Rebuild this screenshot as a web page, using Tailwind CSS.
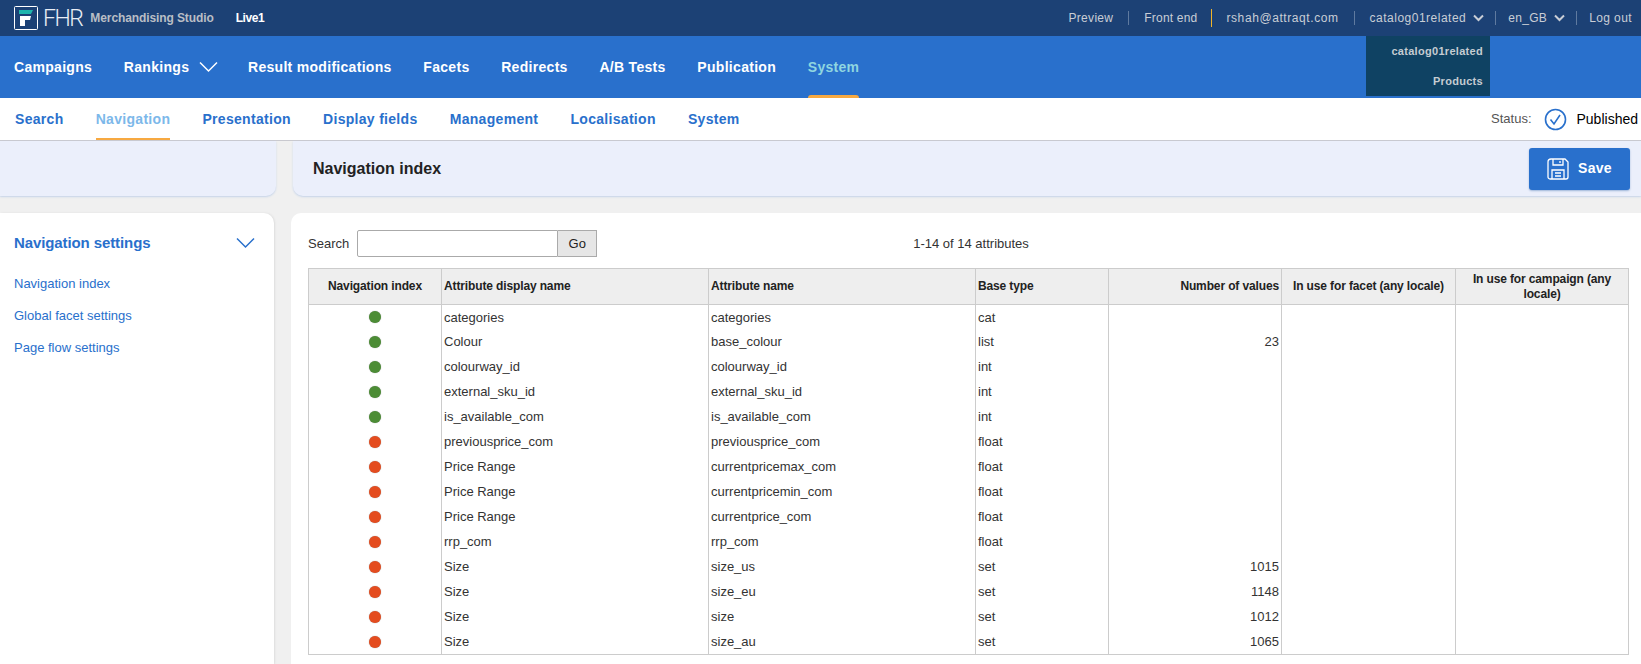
<!DOCTYPE html>
<html><head><meta charset="utf-8"><script src="https://cdn.jsdelivr.net/npm/@tailwindcss/browser@4"></script></head>
<body class="m-0 h-[664px] w-[1641px] overflow-hidden bg-[#f0f0f0] font-['Liberation_Sans',Arial,sans-serif] text-[12px] text-[#333]">
<header class="flex h-[36px] items-center justify-between bg-[#1c4175] pl-[14px] pr-[9px]">
  <div class="flex items-center">
    <svg width="24" height="24" viewBox="0 0 24 24" class="shrink-0"><rect x="0.5" y="0.5" width="23" height="23" rx="1" fill="none" stroke="#fff"/><path d="M5 4h14l-2 4H5z" fill="#1fb5ad"/><path d="M6 10h11l-1 4h-5v6H6z" fill="#fff"/></svg>
    <span class="ml-[5px] font-['Roboto'] text-[23px] font-light leading-none tracking-[-1.5px] text-[#e8edf4]">FHR</span>
    <span class="ml-[8px] text-[12px] font-bold tracking-[-0.1px] text-[#b9bec5]">Merchandising Studio</span>
    <span class="ml-[22px] text-[12px] font-bold tracking-[-0.4px] text-white">Live1</span>
  </div>
  <div class="flex items-center text-[12px] tracking-[0.3px] text-[#c9ced6]">
    <span>Preview</span><i class="mx-[15px] h-[14px] w-px bg-[#5f7a9f]"></i>
    <span class="tracking-[0.2px]">Front end</span><i class="mx-[14px] h-[18px] w-px bg-[#f0b429]"></i>
    <span class="tracking-[0.58px]">rshah@attraqt.com</span><i class="mx-[15px] h-[14px] w-px bg-[#5f7a9f]"></i>
    <span class="tracking-[0.5px]">catalog01related</span>
    <svg width="11" height="8" viewBox="0 0 11 8" class="ml-[7px]"><path d="M1 1.5l4.500 4.500 4.500-4.500" fill="none" stroke="#c9ced6" stroke-width="2"/></svg>
    <i class="ml-[11px] mr-[12px] h-[14px] w-px bg-[#5f7a9f]"></i>
    <span>en_GB</span>
    <svg width="11" height="8" viewBox="0 0 11 8" class="ml-[7px]"><path d="M1 1.500l4.500 4.500 4.500-4.500" fill="none" stroke="#c9ced6" stroke-width="2"/></svg>
    <i class="ml-[11px] mr-[12px] h-[14px] w-px bg-[#5f7a9f]"></i>
    <span class="tracking-[0.4px]">Log out</span>
  </div>
</header>
<nav class="relative flex h-[62px] items-center gap-[31.700px] bg-[#2970cc] pl-[14px] text-[14px] font-bold tracking-[0.3px] text-white">
  <span>Campaigns</span>
  <span class="flex items-center">Rankings<svg width="20" height="12" viewBox="0 0 20 12" class="ml-[10px] mr-[-3px]"><path d="M1 1.500l8.500 8.500 8.500-8.500" fill="none" stroke="#fff" stroke-width="1.500"/></svg></span>
  <span>Result modifications</span><span>Facets</span><span>Redirects</span><span>A/B Tests</span><span>Publication</span>
  <span class="relative flex h-full items-center text-[#8fd6e0]">System<i class="absolute bottom-0 left-0 h-[3px] w-full rounded-t bg-[#f7a941]"></i></span>
  <div class="absolute left-[1366px] top-0 flex h-[60px] w-[124px] flex-col items-end justify-around bg-[#0f4263] pr-[7px] text-[11px] font-bold tracking-[0.3px] text-[#c5ccd2]"><span>catalog01related</span><span>Products</span></div>
</nav>
<div class="flex h-[43px] items-center justify-between border-b border-[#c9c9cf] bg-white pl-[15px] pr-[3px]">
  <div class="flex h-full items-center gap-[32.200px] text-[14px] font-bold tracking-[0.3px] text-[#2970cc]">
    <span>Search</span>
    <span class="relative flex h-full items-center text-[#7cb8ea]">Navigation<i class="absolute bottom-0 left-0 h-[2px] w-full bg-[#f7a941]"></i></span>
    <span>Presentation</span><span>Display fields</span><span>Management</span><span>Localisation</span><span>System</span>
  </div>
  <div class="flex items-center">
    <span class="text-[13px] text-[#555]">Status:</span>
    <svg width="23" height="23" viewBox="0 0 23 23" class="ml-[12px]"><circle cx="11.500" cy="11.500" r="10" fill="none" stroke="#2970cc" stroke-width="1.600"/><path d="M6.500 11.500l3.500 4.500 6-9" fill="none" stroke="#2970cc" stroke-width="1.600"/></svg>
    <span class="ml-[10px] text-[14px] text-black">Published</span>
  </div>
</div>
<div class="flex h-[55px] gap-[17px]">
  <div class="w-[276px] rounded-br-[10px] bg-[#ebeffb] shadow-[0_1px_2px_#c5d3e8]"></div>
  <div class="flex flex-1 items-center justify-between rounded-bl-[10px] bg-[#ebeffb] pl-[20px] pr-[11px] shadow-[0_1px_2px_#c5d3e8]">
    <h1 class="text-[16px] font-bold text-[#222]">Navigation index</h1>
    <button class="flex h-[42px] w-[101px] items-center rounded-[3px] bg-[#2970cc] pl-[18px] text-[14px] font-bold tracking-[0.3px] text-white shadow-[0_1px_2px_#9db5d8]">
      <svg width="22" height="22" viewBox="0 0 22 22" fill="none" stroke="#fff" stroke-width="1.300"><path d="M4 1h14l3 3v15a2 2 0 0 1-2 2H3a2 2 0 0 1-2-2V4a3 3 0 0 1 3-3z"/><path d="M6 1v6h10V1M13 3v2M5 21v-9h12v9M8 15h6M8 18h6"/></svg>
      <span class="ml-[9px]">Save</span>
    </button>
  </div>
</div>
<div class="mt-[17px] flex h-[451px] gap-[17px]">
  <aside class="w-[276px] rounded-tr-[10px] bg-white pl-[14px] pr-[18px] shadow-[1px_0_2px_#ddd]">
    <div class="flex h-[59px] items-center justify-between pt-[1px]"><span class="text-[15px] font-bold tracking-[-0.1px] text-[#2970cc]">Navigation settings</span>
      <svg width="20" height="12" viewBox="0 0 20 12"><path d="M1 1.500l8.500 8.500 8.500-8.500" fill="none" stroke="#2970cc" stroke-width="1.500"/></svg></div>
    <ul class="flex flex-col gap-[16.500px] pt-[4px] text-[13px] leading-[15.500px] text-[#2970cc]"><li>Navigation index</li><li>Global facet settings</li><li>Page flow settings</li></ul>
  </aside>
  <main class="flex-1 rounded-tl-[10px] bg-white pl-[17px] pr-[12px] pt-[17px]">
    <div class="relative flex h-[27px] items-center text-[13px]">
      <span>Search</span>
      <div class="ml-[8px] h-[27px] w-[201px] rounded-l-[2px] border border-[#aaa] bg-white"></div>
      <button class="h-[27px] w-[39px] border border-l-0 border-[#aaa] bg-[#e6e6e6] text-[13px] text-[#222]">Go</button>
      <span class="ml-[316px]">1-14 of 14 attributes</span>
    </div>
    <table class="mt-[11px] w-[1320px] table-fixed border-collapse text-[13px] text-[#333]">
      <colgroup><col class="w-[133px]"><col class="w-[267px]"><col class="w-[267px]"><col class="w-[133px]"><col class="w-[173px]"><col class="w-[174px]"><col class="w-[173px]"></colgroup>
      <thead class="bg-[#eee] text-[12px] tracking-[-0.13px] text-[#222]"><tr class="h-[36px] border-[1.500px] border-[#ccc] text-left font-bold [&>th]:border-[1px] [&>th]:border-[#ccc] [&>th]:px-[2px] [&>th]:py-0 [&>th]:font-bold [&>th]:leading-[15px]">
        <th class="text-center">Navigation index</th><th>Attribute display name</th><th>Attribute name</th><th>Base type</th><th class="text-right">Number of values</th><th class="text-center">In use for facet (any locale)</th><th class="text-center">In use for campaign (any locale)</th></tr></thead>
      <tbody class="border-[1.500px] border-[#ccc] [&_td]:h-[25px] [&_td]:border-x [&_td]:border-[#ccc] [&_td]:px-[2px] [&_td]:py-0 [&_i]:mx-auto [&_i]:block [&_i]:h-[12px] [&_i]:w-[12px] [&_i]:rounded-full [&_i]:shadow-[0_0_1px_rgba(0,0,0,0.45)]">
        <tr><td><i class="bg-[#4c8c35]"></i></td><td>categories</td><td>categories</td><td>cat</td><td class="text-right"></td><td></td><td></td></tr>
        <tr><td><i class="bg-[#4c8c35]"></i></td><td>Colour</td><td>base_colour</td><td>list</td><td class="text-right">23</td><td></td><td></td></tr>
        <tr><td><i class="bg-[#4c8c35]"></i></td><td>colourway_id</td><td>colourway_id</td><td>int</td><td class="text-right"></td><td></td><td></td></tr>
        <tr><td><i class="bg-[#4c8c35]"></i></td><td>external_sku_id</td><td>external_sku_id</td><td>int</td><td class="text-right"></td><td></td><td></td></tr>
        <tr><td><i class="bg-[#4c8c35]"></i></td><td>is_available_com</td><td>is_available_com</td><td>int</td><td class="text-right"></td><td></td><td></td></tr>
        <tr><td><i class="bg-[#e44c1f]"></i></td><td>previousprice_com</td><td>previousprice_com</td><td>float</td><td class="text-right"></td><td></td><td></td></tr>
        <tr><td><i class="bg-[#e44c1f]"></i></td><td>Price Range</td><td>currentpricemax_com</td><td>float</td><td class="text-right"></td><td></td><td></td></tr>
        <tr><td><i class="bg-[#e44c1f]"></i></td><td>Price Range</td><td>currentpricemin_com</td><td>float</td><td class="text-right"></td><td></td><td></td></tr>
        <tr><td><i class="bg-[#e44c1f]"></i></td><td>Price Range</td><td>currentprice_com</td><td>float</td><td class="text-right"></td><td></td><td></td></tr>
        <tr><td><i class="bg-[#e44c1f]"></i></td><td>rrp_com</td><td>rrp_com</td><td>float</td><td class="text-right"></td><td></td><td></td></tr>
        <tr><td><i class="bg-[#e44c1f]"></i></td><td>Size</td><td>size_us</td><td>set</td><td class="text-right">1015</td><td></td><td></td></tr>
        <tr><td><i class="bg-[#e44c1f]"></i></td><td>Size</td><td>size_eu</td><td>set</td><td class="text-right">1148</td><td></td><td></td></tr>
        <tr><td><i class="bg-[#e44c1f]"></i></td><td>Size</td><td>size</td><td>set</td><td class="text-right">1012</td><td></td><td></td></tr>
        <tr><td><i class="bg-[#e44c1f]"></i></td><td>Size</td><td>size_au</td><td>set</td><td class="text-right">1065</td><td></td><td></td></tr>
      </tbody>
    </table>
  </main>
</div>
</body></html>
